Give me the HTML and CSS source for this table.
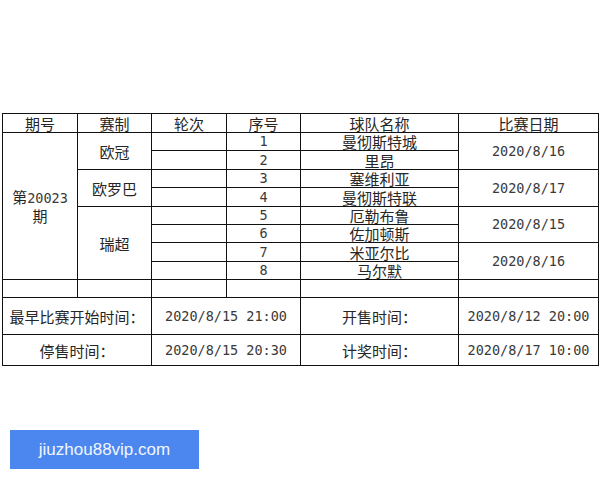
FILE: index.html
```html
<!DOCTYPE html>
<html lang="zh">
<head>
<meta charset="utf-8">
<link rel="stylesheet" href="styles.css">
</head>
<body>
<div class="page">
  <div class="sheet">
    <div class="c">期号</div>
    <div class="c">赛制</div>
    <div class="c">轮次</div>
    <div class="c">序号</div>
    <div class="c">球队名称</div>
    <div class="c">比赛日期</div>

    <div class="c span8 issue"><span>第<span class="num">20023</span></span><span>期</span></div>
    <div class="c span2">欧冠</div>
    <div class="c"></div>
    <div class="c num">1</div>
    <div class="c">曼彻斯特城</div>
    <div class="c span2 num">2020/8/16</div>

    <div class="c"></div>
    <div class="c num">2</div>
    <div class="c">里昂</div>

    <div class="c span2">欧罗巴</div>
    <div class="c"></div>
    <div class="c num">3</div>
    <div class="c">塞维利亚</div>
    <div class="c span2 num">2020/8/17</div>

    <div class="c"></div>
    <div class="c num">4</div>
    <div class="c">曼彻斯特联</div>

    <div class="c span4">瑞超</div>
    <div class="c"></div>
    <div class="c num">5</div>
    <div class="c">厄勒布鲁</div>
    <div class="c span2 num">2020/8/15</div>

    <div class="c"></div>
    <div class="c num">6</div>
    <div class="c">佐加顿斯</div>

    <div class="c"></div>
    <div class="c num">7</div>
    <div class="c">米亚尔比</div>
    <div class="c span2 num">2020/8/16</div>

    <div class="c"></div>
    <div class="c num">8</div>
    <div class="c">马尔默</div>

    <div class="c"></div>
    <div class="c"></div>
    <div class="c"></div>
    <div class="c"></div>
    <div class="c"></div>
    <div class="c"></div>

    <div class="c wide">最早比赛开始时间：</div>
    <div class="c wide num">2020/8/15 21:00</div>
    <div class="c">开售时间：</div>
    <div class="c num">2020/8/12 20:00</div>

    <div class="c wide">停售时间：</div>
    <div class="c wide num">2020/8/15 20:30</div>
    <div class="c">计奖时间：</div>
    <div class="c num">2020/8/17 10:00</div>
  </div>

  <div class="badge">jiuzhou88vip.com</div>
</div>
</body>
</html>
```

FILE: styles.css
```css
html, body {
  margin: 0;
  padding: 0;
  background: #ffffff;
}

.page {
  width: 600px;
  height: 480px;
  padding-top: 113px;
  box-sizing: border-box;
  display: flex;
  flex-direction: column;
}

.sheet {
  margin-left: 2px;
  width: 597px;
  box-sizing: border-box;
  padding: 1px;
  gap: 1px;
  background: #111111;
  display: grid;
  grid-template-columns: 74px 73px 74px 73px 157px 139px;
  grid-template-rows: 18px 17px 18px 17px 18px 17px 17px 18px 17px 17px 36px 30px;
  font-family: "Noto Sans CJK SC", "DejaVu Sans", sans-serif;
  font-size: 15px;
  color: #262626;
}

.c {
  background: #ffffff;
  display: flex;
  align-items: center;
  justify-content: center;
  line-height: 17px;
  white-space: nowrap;
}

.num {
  font-family: "DejaVu Sans Mono", "Noto Sans CJK SC", monospace;
  font-size: 13.5px;
  color: #3a3a3a;
}

.span2 { grid-row: span 2; }
.span4 { grid-row: span 4; }
.span8 { grid-row: span 8; }
.wide { grid-column: span 2; }

.issue {
  flex-direction: column;
  line-height: 18px;
}

.badge {
  margin-top: 64px;
  margin-left: 10px;
  width: 189px;
  height: 39px;
  background: #4b87ee;
  color: #f2f6ff;
  font-family: "Liberation Sans", Arial, sans-serif;
  font-size: 17px;
  display: flex;
  align-items: center;
  justify-content: center;
}
```
